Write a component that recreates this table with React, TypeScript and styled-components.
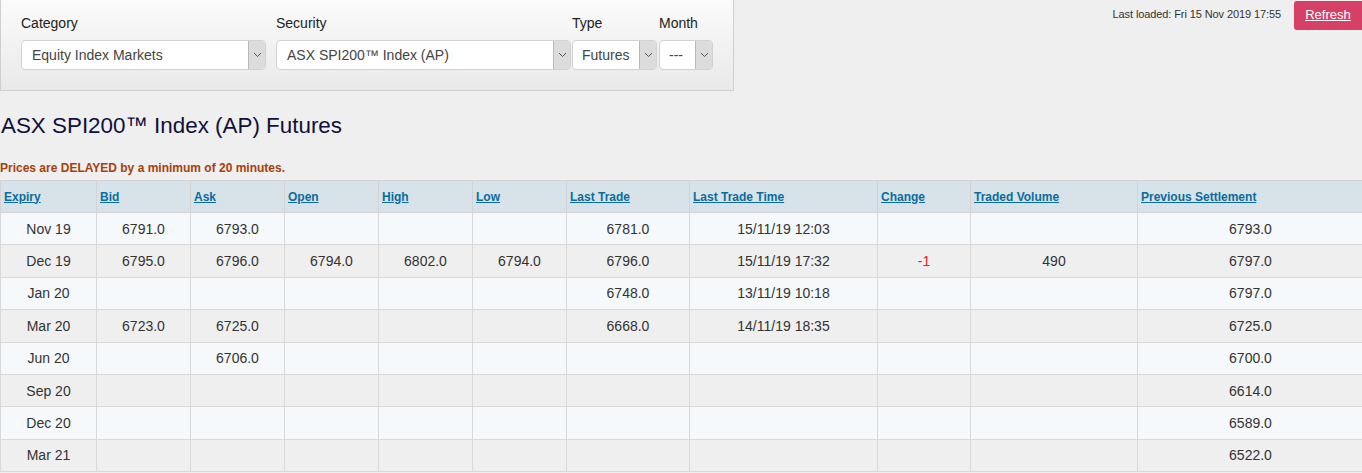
import React from "react";
import styled, { createGlobalStyle } from "styled-components";

const GlobalStyle = createGlobalStyle`
  html, body { margin: 0; padding: 0; background: #efefef; }
  body { font-family: "Liberation Sans", Arial, sans-serif; color: #333; overflow: hidden; }
  * { box-sizing: border-box; }
`;

const Page = styled.div`
  width: 1362px;
  display: flex;
  flex-direction: column;
`;

const TopBar = styled.div`
  display: flex;
  justify-content: space-between;
  align-items: flex-start;
`;

const FilterPanel = styled.div`
  width: 734px;
  height: 91px;
  border: 1px solid #cfcfcf;
  border-top: none;
  background: linear-gradient(#fbfbfb, #e9e9e9);
  padding: 14px 0 0 20px;
  display: flex;
  align-items: flex-start;
`;

const Field = styled.div<{ $w: number; $mr: number }>`
  width: ${(p) => p.$w}px;
  margin-right: ${(p) => p.$mr}px;
  display: flex;
  flex-direction: column;
`;

const Label = styled.label`
  font-size: 14px;
  color: #222;
  height: 18px;
  line-height: 18px;
  margin-bottom: 8px;
`;

const SelectBox = styled.div`
  height: 30px;
  display: flex;
  border: 1px solid #d2d2d2;
  border-radius: 4px;
  background: #fff;
  overflow: hidden;
`;

const SelectText = styled.div<{ $center?: boolean }>`
  flex: 1;
  font-size: 14px;
  color: #444;
  line-height: 28px;
  padding-left: ${(p) => (p.$center ? 9 : 10)}px;
  white-space: nowrap;
  overflow: hidden;
`;

const Arrow = styled.div`
  width: 17px;
  background: #dcdcdc;
  border-left: 1px solid #b8b8b8;
  display: flex;
  align-items: center;
  justify-content: center;
`;

const RightInfo = styled.div`
  display: flex;
  align-items: flex-start;
  padding-top: 1px;
`;

const Loaded = styled.div`
  font-size: 11px;
  letter-spacing: -0.1px;
  color: #333;
  margin-top: 7px;
  margin-right: 13px;
`;

const RefreshBtn = styled.a`
  display: block;
  width: 68px;
  height: 29px;
  background: #d63f66;
  border-radius: 3px 0 0 3px;
  color: #fff;
  font-size: 13px;
  text-decoration: underline;
  text-align: center;
  line-height: 28px;
`;

const Title = styled.h1`
  margin: 22px 0 0 1px;
  font-size: 22.4px;
  font-weight: normal;
  color: #10103a;
  line-height: 26px;
`;

const Delay = styled.p`
  margin: 22px 0 0 0;
  font-size: 12px;
  font-weight: bold;
  color: #a8400a;
  line-height: 14px;
`;

const Table = styled.table`
  margin-top: 5px;
  width: 1363px;
  border-collapse: collapse;
  table-layout: fixed;
`;

const Th = styled.th<{ $w: number }>`
  width: ${(p) => p.$w}px;
  height: 32px;
  background: #d7e3e8;
  border: 1px solid #d3d3d3;
  text-align: left;
  padding: 0 3px;
  font-size: 12px;
  font-weight: bold;
  a { color: #0b6ba0; text-decoration: underline; }
`;

const Tr = styled.tr<{ $odd: boolean }>`
  background: ${(p) => (p.$odd ? "#f5f9fc" : "#efefef")};
`;

const Td = styled.td<{ $neg?: boolean }>`
  height: 32.4px;
  border: 1px solid #d8d8d8;
  text-align: center;
  font-size: 14px;
  color: ${(p) => (p.$neg ? "#e8201c" : "#333")};
  padding: 0 4px;
`;

const Chevron = () => (
  <svg width="9" height="6" viewBox="0 0 9 6">
    <path d="M1 1 L4.5 4.5 L8 1" fill="none" stroke="#555" strokeWidth="1" />
  </svg>
);

const Select = ({ value, center }: { value: string; center?: boolean }) => (
  <SelectBox>
    <SelectText $center={center}>{value}</SelectText>
    <Arrow>
      <Chevron />
    </Arrow>
  </SelectBox>
);

const columns: [string, number][] = [
  ["Expiry", 96],
  ["Bid", 94],
  ["Ask", 94],
  ["Open", 94],
  ["High", 94],
  ["Low", 94],
  ["Last Trade", 123],
  ["Last Trade Time", 188],
  ["Change", 93],
  ["Traded Volume", 167],
  ["Previous Settlement", 226],
];

const rows: string[][] = [
  ["Nov 19", "6791.0", "6793.0", "", "", "", "6781.0", "15/11/19 12:03", "", "", "6793.0"],
  ["Dec 19", "6795.0", "6796.0", "6794.0", "6802.0", "6794.0", "6796.0", "15/11/19 17:32", "-1", "490", "6797.0"],
  ["Jan 20", "", "", "", "", "", "6748.0", "13/11/19 10:18", "", "", "6797.0"],
  ["Mar 20", "6723.0", "6725.0", "", "", "", "6668.0", "14/11/19 18:35", "", "", "6725.0"],
  ["Jun 20", "", "6706.0", "", "", "", "", "", "", "", "6700.0"],
  ["Sep 20", "", "", "", "", "", "", "", "", "", "6614.0"],
  ["Dec 20", "", "", "", "", "", "", "", "", "", "6589.0"],
  ["Mar 21", "", "", "", "", "", "", "", "", "", "6522.0"],
];

export default function App() {
  return (
    <Page>
      <GlobalStyle />
      <TopBar>
        <FilterPanel>
          <Field $w={245} $mr={10}>
            <Label>Category</Label>
            <Select value="Equity Index Markets" />
          </Field>
          <Field $w={295} $mr={1}>
            <Label>Security</Label>
            <Select value="ASX SPI200™ Index (AP)" />
          </Field>
          <Field $w={85} $mr={2}>
            <Label>Type</Label>
            <Select value="Futures" center />
          </Field>
          <Field $w={54} $mr={0}>
            <Label>Month</Label>
            <Select value="---" center />
          </Field>
        </FilterPanel>
        <RightInfo>
          <Loaded>Last loaded: Fri 15 Nov 2019 17:55</Loaded>
          <RefreshBtn href="#">Refresh</RefreshBtn>
        </RightInfo>
      </TopBar>
      <Title>ASX SPI200™ Index (AP) Futures</Title>
      <Delay>Prices are DELAYED by a minimum of 20 minutes.</Delay>
      <Table>
        <thead>
          <tr>
            {columns.map(([name, w]) => (
              <Th key={name} $w={w}>
                <a href="#">{name}</a>
              </Th>
            ))}
          </tr>
        </thead>
        <tbody>
          {rows.map((r, i) => (
            <Tr key={r[0]} $odd={i % 2 === 0}>
              {r.map((c, j) => (
                <Td key={j} $neg={c.startsWith("-") && c !== "---"}>
                  {c}
                </Td>
              ))}
            </Tr>
          ))}
        </tbody>
      </Table>
    </Page>
  );
}
